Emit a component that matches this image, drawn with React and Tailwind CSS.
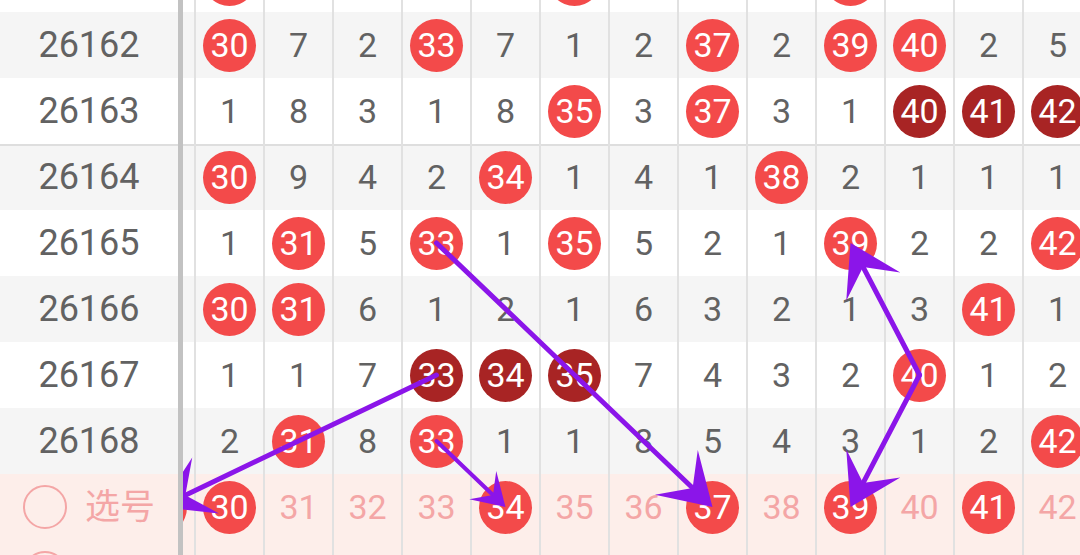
import React from "react";

const rows = [
  { period: "", cells: ["", "b", "", "", "", "", "b", "", "", "", "b", "", "", ""] },
  { period: "26162", cells: ["", "b30", "7", "2", "b33", "7", "1", "2", "b37", "2", "b39", "b40", "2", "5"] },
  { period: "26163", cells: ["", "1", "8", "3", "1", "8", "b35", "3", "b37", "3", "1", "d40", "d41", "d42"] },
  { period: "26164", cells: ["", "b30", "9", "4", "2", "b34", "1", "4", "1", "b38", "2", "1", "1", "1"], split: true },
  { period: "26165", cells: ["", "1", "b31", "5", "b33", "1", "b35", "5", "2", "1", "b39", "2", "2", "b42"] },
  { period: "26166", cells: ["", "b30", "b31", "6", "1", "2", "1", "6", "3", "2", "1", "3", "b41", "1"] },
  { period: "26167", cells: ["", "1", "1", "7", "d33", "d34", "d35", "7", "4", "3", "2", "b40", "1", "2"] },
  { period: "26168", cells: ["", "2", "b31", "8", "b33", "1", "1", "8", "5", "4", "3", "1", "2", "b42"] },
];

// 选号 row, first column sits under the frozen column so only the ball edge shows
const pickRow = ["b", "b30", "31", "32", "33", "b34", "35", "36", "b37", "38", "b39", "40", "b41", "42"];

const rowBg = (i) => (i % 2 === 1 ? "bg-[#f5f5f5]" : "bg-white");

// arrows in grid coords: [fromCol, fromRow, toCol, toRow]
const arrows = [
  [4, 4, 8, 8],
  [4, 6, 0, 8],
  [4, 7, 5, 8],
  [11, 6, 10, 4],
  [11, 6, 10, 8],
];

const cx = (c) => c * 69 + 33.5;
const cy = (r) => r * 66 + 33;

const Arrow = ({ a }) => {
  const x1 = cx(a[0]);
  const y1 = cy(a[1]);
  const x2 = cx(a[2]);
  const y2 = cy(a[3]);
  const dx = x2 - x1;
  const dy = y2 - y1;
  const len = Math.hypot(dx, dy);
  const ux = dx / len;
  const uy = dy / len;
  const L = Math.min(50, len * 0.33);
  const W = L * 0.62;
  const N = L * 0.55;
  const bx = x2 - ux * L;
  const by = y2 - uy * L;
  const nx = x2 - ux * N;
  const ny = y2 - uy * N;
  const p1 = `${bx - uy * W},${by + ux * W}`;
  const p2 = `${bx + uy * W},${by - ux * W}`;
  return (
    <g>
      <line x1={x1} y1={y1} x2={nx} y2={ny} stroke="#8b15e9" strokeWidth={L < 40 ? 4 : 5} strokeLinecap="round" />
      <polygon points={`${x2},${y2} ${p1} ${nx},${ny} ${p2}`} fill="#8b15e9" />
    </g>
  );
};

const Cell = ({ v, pink }) => {
  let inner = null;
  if (v[0] === "b" || v[0] === "d") {
    inner = (
      <div
        className={`flex h-[53px] w-[53px] items-center justify-center rounded-full text-[34px] leading-none text-white ${
          v[0] === "b" ? "bg-[#f34a4a]" : "bg-[#a82424]"
        }`}
      >
        {v.slice(1)}
      </div>
    );
  } else if (v) {
    inner = <span className={`text-[34px] leading-none ${pink ? "text-[#f4a6a6]" : "text-[#626262]"}`}>{v}</span>;
  }
  return (
    <div className="flex h-[66px] w-[69px] shrink-0 items-center justify-center border-r-2 border-[#e1e1e1]">
      {inner}
    </div>
  );
};

const App = () => {
  return (
    <div className="h-[555px] w-[1080px] overflow-hidden bg-white" style={{ fontFamily: "Roboto, 'Noto Sans CJK SC', sans-serif" }}>
      <div className="-mt-[54px] flex">
        {/* frozen period column */}
        <div className="w-[183px] shrink-0 border-r-[5px] border-[#c2c2c2]">
          {rows.map((row, i) => (
            <div
              key={i}
              className={`flex h-[66px] items-center justify-center text-[36px] leading-none text-[#626262] ${rowBg(i)} ${
                row.split ? "shadow-[inset_0_2px_0_#dedede]" : ""
              }`}
            >
              {row.period}
            </div>
          ))}
          <div className="flex h-[66px] items-center justify-center gap-[18px] bg-[#fdeeea]">
            <div className="h-[44px] w-[44px] rounded-full border-2 border-[#f4a6a6]"></div>
            <span className="text-[35px] leading-none text-[#f4a6a6]">选号</span>
          </div>
          <div className="flex h-[66px] items-start justify-start bg-[#fdeeea] pl-[23px] pt-[11px]">
            <div className="h-[44px] w-[44px] rounded-full border-2 border-[#f4a6a6]"></div>
          </div>
        </div>

        {/* scrolled number grid */}
        <div className="flex-1 overflow-hidden">
          <div className="relative -ml-[56px] w-[966px]">
            {rows.map((row, i) => (
              <div key={i} className={`flex ${rowBg(i)} ${row.split ? "shadow-[inset_0_2px_0_#dedede]" : ""}`}>
                {row.cells.map((v, j) => (
                  <Cell key={j} v={v} />
                ))}
              </div>
            ))}
            <div className="flex bg-[#fdeeea]">
              {pickRow.map((v, j) => (
                <Cell key={j} v={v} pink />
              ))}
            </div>
            <div className="flex bg-[#fdeeea]">
              {pickRow.map((v, j) => (
                <Cell key={j} v="" pink />
              ))}
            </div>
            <svg className="pointer-events-none absolute inset-0 h-full w-full" width="966" height="660">
              {arrows.map((a, i) => (
                <Arrow key={i} a={a} />
              ))}
            </svg>
          </div>
        </div>
      </div>
    </div>
  );
};

export default App;
